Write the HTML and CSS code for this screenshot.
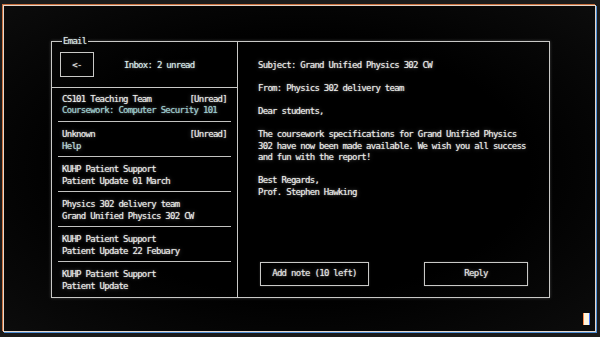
FILE: index.html
```html
<!DOCTYPE html>
<html lang="en">

<head>
    <meta charset="UTF-8">
    <meta name="viewport" content="width=device-width, initial-scale=1.0">
    <title>Email terminal</title>
    <link rel="stylesheet" href="styles.css">
</head>

<body>
    <div class="screen">
        <div class="panel">
            <span class="panel_title">Email</span>

            <!-- inbox list -->
            <div class="inbox">
                <div class="inbox_head">
                    <button type="button" class="back_btn">&lt;-</button>
                    <p class="inbox_count">Inbox: 2 unread</p>
                </div>
                <ul class="mail_list">
                    <li class="mail selected">
                        <p class="mail_from">CS101 Teaching Team<span>[Unread]</span></p>
                        <p class="mail_subject">Coursework: Computer Security 101</p>
                    </li>
                    <li class="mail">
                        <p class="mail_from">Unknown<span>[Unread]</span></p>
                        <p class="mail_subject">Help</p>
                    </li>
                    <li class="mail">
                        <p class="mail_from">KUHP Patient Support</p>
                        <p class="mail_subject">Patient Update 01 March</p>
                    </li>
                    <li class="mail">
                        <p class="mail_from">Physics 302 delivery team</p>
                        <p class="mail_subject">Grand Unified Physics 302 CW</p>
                    </li>
                    <li class="mail">
                        <p class="mail_from">KUHP Patient Support</p>
                        <p class="mail_subject">Patient Update 22 Febuary</p>
                    </li>
                    <li class="mail">
                        <p class="mail_from">KUHP Patient Support</p>
                        <p class="mail_subject">Patient Update</p>
                    </li>
                </ul>
            </div>

            <!-- open message -->
            <div class="reader">
                <p>Subject: Grand Unified Physics 302 CW</p>
                <p>From: Physics 302 delivery team</p>
                <p>Dear students,</p>
                <p>The coursework specifications for Grand Unified Physics<br>302 have now been made available. We wish you all success<br>and fun with the report!</p>
                <p>Best Regards,<br>Prof. Stephen Hawking</p>

                <div class="reader_btns">
                    <button type="button" class="note_btn">Add note (10 left)</button>
                    <button type="button" class="reply_btn">Reply</button>
                </div>
            </div>
        </div>

        <div class="cursor"></div>
    </div>
</body>

</html>
```

FILE: styles.css
```css
* {
    box-sizing: border-box;
}

body {
    margin: 0;
    width: 600px;
    height: 337px;
    overflow: hidden;
    background-color: #1b1b1b;
    font-family: "DejaVu Sans Mono", "Liberation Mono", monospace;
    font-size: 9px;
    letter-spacing: -0.72px;
    color: #ebebe8;
    padding: 5px 4px 5px 3px;
}

p {
    margin: 0;
}

.screen {
    position: relative;
    width: 593px;
    height: 327px;
    border: 1px solid #e6d8cc;
    box-shadow: -1px -1px 0 #c9703e, 1px 1px 0 #4d8ed6;
    background: radial-gradient(ellipse at center, #000 55%, #0c0c0c 100%);
    padding: 35px 0 0 47px;
}

.panel {
    position: relative;
    display: flex;
    width: 499px;
    height: 257px;
    border: 1px solid #c9c9c7;
    box-shadow: 0 0 3px rgba(255, 255, 255, 0.25);
    text-shadow: 0 0 1px rgba(255, 255, 255, 0.6), 0 0 4px rgba(255, 255, 255, 0.35);
}

.panel_title {
    position: absolute;
    top: -6px;
    left: 10px;
    padding: 0 1px;
    line-height: 11px;
    background-color: #000;
    color: #d8e4e4;
}

.inbox {
    width: 186px;
    border-right: 1px solid #c9c9c7;
    display: flex;
    flex-direction: column;
}

.inbox_head {
    display: flex;
    align-items: center;
    height: 47px;
    border-bottom: 1px solid #c9c9c7;
    padding: 0 0 0 8px;
}

.back_btn {
    width: 34px;
    height: 25px;
    margin-top: 1px;
    background: none;
    border: 1.5px solid #c9c9c7;
    color: #e4e4e2;
    font: inherit;
    letter-spacing: inherit;
    text-shadow: inherit;
}

.inbox_count {
    margin-left: 30px;
    margin-top: 1px;
    color: #d6ecec;
}

.mail_list {
    list-style: none;
    margin: 0;
    padding: 0;
}

.mail {
    height: 35px;
    margin: 0 6px;
    padding: 7px 4px 0 4px;
    line-height: 11.5px;
    border-bottom: 1.5px solid #c2c2c0;
}

.mail:first-child {
    height: 34.5px;
    padding-top: 6px;
}

.mail:last-child {
    border-bottom: none;
}

.mail_from {
    display: flex;
    justify-content: space-between;
}

.selected .mail_subject {
    color: #93cfd2;
}

.mail:nth-child(2) .mail_subject {
    color: #b7dcdc;
}

.reader {
    flex: 1;
    display: flex;
    flex-direction: column;
    padding: 18px 21px 11px 20px;
    line-height: 11.5px;
}

.reader p {
    margin-bottom: 11.5px;
}

.reader_btns {
    margin-top: auto;
    display: flex;
    justify-content: space-between;
    padding-left: 2px;
}

.reader_btns button {
    height: 24px;
    background: none;
    border: 1.5px solid #c9c9c7;
    color: #e4e4e2;
    font: inherit;
    letter-spacing: inherit;
    text-shadow: inherit;
    box-shadow: 0 0 2px rgba(255, 255, 255, 0.2);
}

.note_btn {
    width: 109px;
}

.reply_btn {
    width: 104px;
}

.cursor {
    position: absolute;
    right: 6px;
    bottom: 6px;
    width: 5px;
    height: 12px;
    background-color: #fff4dc;
    box-shadow: -1px 0 0 #ff8a4a, 1px 0 0 #4a7dff;
}
```
